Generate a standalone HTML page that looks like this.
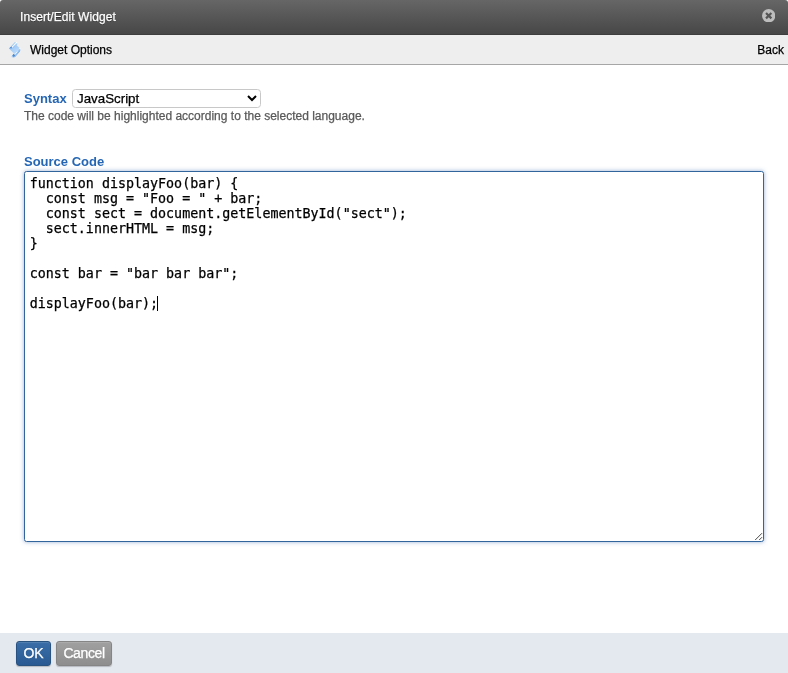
<!DOCTYPE html>
<html>
<head>
<meta charset="utf-8">
<title>Insert/Edit Widget</title>
<style>
html,body{margin:0;padding:0;}
body{width:788px;height:673px;background:#fff;font-family:"Liberation Sans",Arial,sans-serif;font-size:13px;color:#000;overflow:hidden;position:relative;}
#title{position:absolute;left:0;top:0;width:788px;height:34px;background:linear-gradient(#666,#474747);border-radius:3px 3px 0 0;border-bottom:1px solid #3e3e3e;box-sizing:content-box;}
#title .t{letter-spacing:.06px;position:absolute;left:20px;top:9px;color:#fff;font-size:12px;line-height:16px;text-shadow:0 1px 0 rgba(0,0,0,.4);}
#close{position:absolute;left:762.1px;top:8.8px;width:13.4px;height:13.4px;}
#sub{position:absolute;left:0;top:35px;width:788px;height:29px;background:#eee;border-bottom:1px solid #a6a6a6;}
#sub .w{position:absolute;left:30px;top:7px;font-size:12px;line-height:16px;}
#sub .b{position:absolute;right:4px;top:7px;font-size:12px;line-height:16px;}
#ico{position:absolute;left:4px;top:3px;width:24px;height:24px;}
.lbl{-webkit-text-stroke:0;position:absolute;color:#2566b4;font-weight:bold;font-size:13px;line-height:16px;}
#sel{position:absolute;left:72px;top:89px;width:189px;height:19px;box-sizing:border-box;border:1px solid #c8c8c8;border-radius:3.5px;background:#fff;font-size:13.33px;line-height:17px;padding-left:4px;}
#help{position:absolute;left:24px;top:108px;font-size:12px;line-height:16px;color:#595959;}
#ta{position:absolute;left:24px;top:171px;width:740px;height:371px;box-sizing:border-box;border:1px solid #33659d;border-radius:2.5px;box-shadow:0 0 4px rgba(50,100,165,.5);background:#fff;}
#ta pre{margin:0;position:absolute;left:4.7px;top:4px;font-family:"DejaVu Sans Mono","Liberation Mono",monospace;font-size:13.33px;line-height:15px;color:#000;}
#caret{position:absolute;left:132px;top:124px;width:1px;height:15px;background:#000;}
#grip{position:absolute;left:729px;top:359px;}
#foot{position:absolute;left:0;top:633px;width:788px;height:40px;background:#e4e8ef;}
.btn{position:absolute;top:8px;height:25px;box-shadow:0 1px 1px rgba(0,0,0,.2),inset 0 1px 0 rgba(255,255,255,.12);box-sizing:border-box;border-radius:3px;color:#fff;font-size:14px;line-height:22px;text-align:center;}
#ok{left:16px;width:35px;background:linear-gradient(#3a6ea8,#2a5a92);border:1px solid #28527f;}
#cancel{letter-spacing:-0.4px;left:56px;width:56px;background:linear-gradient(#a0a0a0,#8e8e8e);border:1px solid #858585;}
#wrap{-webkit-text-stroke:0.25px;position:absolute;left:0;top:0;width:788px;height:673px;will-change:transform;}
</style>
</head>
<body><div id="wrap">
<div id="title"><span class="t">Insert/Edit Widget</span>
<svg id="close" viewBox="0 0 13 13"><circle cx="6.5" cy="6.5" r="6.5" fill="#bdbdbd"/><path d="M3.9 3.9 L9.1 9.1 M9.1 3.9 L3.9 9.1" stroke="#555" stroke-width="2.1" stroke-linecap="butt"/></svg>
</div>
<div id="sub">
<svg id="ico" viewBox="0 0 24 24">
<defs>
<linearGradient id="g1" x1="0" y1="0" x2="1" y2="1"><stop offset="0" stop-color="#8ec0f4"/><stop offset="1" stop-color="#cbe3fb"/></linearGradient>
<linearGradient id="g2" x1="0" y1="1" x2="1" y2="0"><stop offset="0" stop-color="#7ab2ee"/><stop offset="1" stop-color="#b5d6f9"/></linearGradient>
<linearGradient id="g3" x1="0" y1="1" x2="1" y2="0"><stop offset="0" stop-color="#b9d9fa"/><stop offset="1" stop-color="#84b9f1"/></linearGradient>
<filter id="bl" x="-20%" y="-20%" width="140%" height="140%"><feGaussianBlur stdDeviation="0.35"/></filter>
</defs>
<g filter="url(#bl)">
<path d="M5 10.6 L10.9 4.1 L13.2 4.7 L13.2 6.9 L8.4 11.6 Z" fill="url(#g2)"/>
<path d="M7.6 9.6 L12.2 4.9" stroke="#fff" stroke-width="1.1" stroke-linecap="round" opacity=".9"/>
<path d="M5 10.6 L7.4 8.4 L8.2 10.6 Z" fill="#4b88cc"/>
<path d="M5 10.6 L8.2 10.6 L12.6 7.3 L16.2 10.6 L10.6 16.2 Z" fill="url(#g1)"/>
<path d="M16.2 10.6 L16.2 12.6 L9.8 19.9 L7.2 18.9 L9.2 16 L10.6 16.2 Z" fill="url(#g3)"/>
<path d="M8.2 18 L9.6 15.8 L11.2 17.2 L10 19 Z" fill="#4b88cc"/>
<path d="M10.9 16.1 L13.2 13.8" stroke="#fff" stroke-width=".9" stroke-linecap="round" opacity=".8"/><path d="M10.6 19.2 L16 12.8" stroke="#5d9de2" stroke-width=".8" opacity=".8"/><circle cx="15.9" cy="10.6" r=".7" fill="#fff"/><circle cx="12.6" cy="4.6" r=".7" fill="#fff"/>
</g>
</svg>
<span class="w">Widget Options</span><span class="b">Back</span></div>
<span class="lbl" style="left:24px;top:91px;">Syntax</span>
<div id="sel">JavaScript<svg style="position:absolute;right:3px;top:5px" width="10" height="7" viewBox="0 0 10 7"><path d="M1 1 L5 5 L9 1" fill="none" stroke="#000" stroke-width="2"/></svg></div>
<div id="help">The code will be highlighted according to the selected language.</div>
<span class="lbl" style="left:24px;top:154px;">Source Code</span>
<div id="ta"><pre>function displayFoo(bar) {
  const msg = "Foo = " + bar;
  const sect = document.getElementById("sect");
  sect.innerHTML = msg;
}

const bar = "bar bar bar";

displayFoo(bar);</pre><i id="caret"></i><svg id="grip" width="10" height="10" viewBox="0 0 10 10"><path d="M1.2 9 L8 2.2 M5.2 9 L8 6.2" stroke="#4a4a4a" stroke-width="1" fill="none"/></svg></div>
<div id="foot"><div class="btn" id="ok">OK</div><div class="btn" id="cancel">Cancel</div></div>
</div></body>
</html>
